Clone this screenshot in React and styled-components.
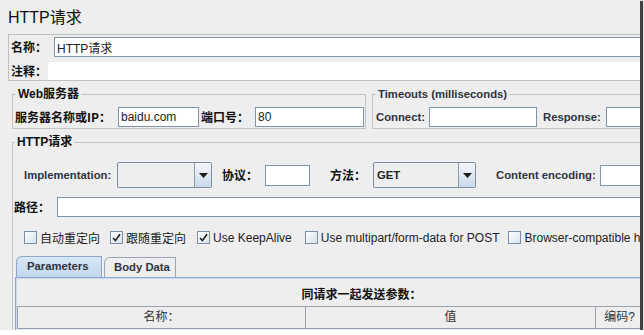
import React from 'react';
import styled, { createGlobalStyle } from 'styled-components';

const Global = createGlobalStyle`
  html, body { margin: 0; padding: 0; background: #ffffff; }
  body {
    font-family: "Liberation Sans", "Noto Sans CJK SC", sans-serif;
    font-size: 12px;
    color: #222;
  }
  * { box-sizing: border-box; }
`;

const Frame = styled.div`
  width: 640px;
  height: 330px;
  overflow: hidden;
  background: #eeeeee;
  box-shadow: 2px 2px 1px 1px rgba(45, 45, 45, 0.9);
`;

const Inner = styled.div`
  width: 722px;
`;

const Title = styled.div`
  margin: 8px 0 6px 8px;
  font-size: 16px;
  line-height: 20px;
  color: #111;
`;

const NamePanel = styled.div`
  margin-left: 8px;
  border: 1px solid #c0c0c0;
  border-right: none;
  padding-top: 2px;
  display: flex;
  flex-direction: column;
  gap: 5px;
`;

const NameRow = styled.div`
  display: flex;
  align-items: center;
  height: ${p => p.$h}px;
`;

const CjkLabel = styled.div`
  flex: none;
  width: ${p => p.$w}px;
  margin-left: ${p => p.$ml || 0}px;
  padding-left: ${p => p.$pl || 0}px;
  font-family: "Noto Sans CJK SC", sans-serif;
  font-weight: 700;
  font-size: 12px;
  color: #111;
  white-space: nowrap;
  line-height: 16px;
`;

const EnLabel = styled.div`
  flex: none;
  width: ${p => p.$w}px;
  margin-left: ${p => p.$ml || 0}px;
  font-family: "Liberation Sans", sans-serif;
  font-weight: 700;
  font-size: 11.3px;
  color: #2f3342;
  white-space: nowrap;
  line-height: 16px;
`;

const Field = styled.input`
  flex: ${p => (p.$w ? 'none' : '1')};
  width: ${p => (p.$w ? `${p.$w}px` : 'auto')};
  min-width: 0;
  height: ${p => p.$h || 20}px;
  border: 1px solid #8194aa;
  background: #ffffff;
  padding: 0 2px;
  margin: 0;
  font-family: "Liberation Sans", "Noto Sans CJK SC", sans-serif;
  font-size: 12px;
  color: #222;
  outline: none;
`;

const CommentArea = styled.div`
  flex: 1;
  height: 18px;
  background: #ffffff;
`;

const FieldsetRow = styled.div`
  display: flex;
  gap: 6px;
  margin: 7px 0 0 12px;
`;

const Group = styled.fieldset`
  margin: 0;
  min-width: 0;
  flex: ${p => (p.$w ? 'none' : '1')};
  width: ${p => (p.$w ? `${p.$w}px` : 'auto')};
  padding: 7px 0 1px ${p => p.$pl}px;
  border: 1px solid #c4c4c4;
  display: flex;
  align-items: center;
`;

const Legend = styled.legend`
  margin-left: ${p => p.$ml || 0}px;
  padding: 0 2px;
  font-weight: 700;
  font-size: ${p => (p.$cjk ? 12 : 11.3)}px;
  font-family: ${p => (p.$cjk ? '"Liberation Sans", "Noto Sans CJK SC", sans-serif' : '"Liberation Sans", sans-serif')};
  line-height: 12px;
  color: ${p => (p.$cjk ? '#111' : '#2f3342')};
`;

const HttpGroup = styled.fieldset`
  margin: 7px 12px 0 12px;
  min-width: 0;
  padding: 14px 2px 20px 1px;
  border: 1px solid #c4c4c4;
`;

const FormRow = styled.div`
  display: flex;
  align-items: center;
  height: ${p => p.$h}px;
  margin-top: ${p => p.$mt || 0}px;
`;

const Combo = styled.div`
  flex: none;
  width: ${p => p.$w}px;
  height: 26px;
  display: flex;
  border: 1px solid #7d8ea3;
  border-radius: 2px;
  background: #eeeeee;
  overflow: hidden;
`;

const ComboValue = styled.div`
  flex: 1;
  padding-left: 3px;
  line-height: 24px;
  font-weight: 700;
  font-size: 11.3px;
  color: #222;
`;

const ArrowButton = styled.div`
  flex: none;
  width: 17px;
  border-left: 1px solid #8a9bb0;
  background: linear-gradient(#f4f7fb, #c9d8ea);
  display: flex;
  align-items: center;
  justify-content: center;
`;

const CheckRow = styled.div`
  display: flex;
  align-items: center;
  height: 17px;
  margin-top: 12px;
  padding-left: 10px;
  white-space: nowrap;
`;

const CheckItem = styled.div`
  display: flex;
  align-items: center;
  gap: 3px;
  margin-right: ${p => p.$mr}px;
  flex: none;
`;

const Box = styled.div`
  width: 13px;
  height: 13px;
  border: 1px solid #7b8ea4;
  background: linear-gradient(135deg, #ffffff, #d6e1ee);
  display: flex;
  align-items: center;
  justify-content: center;
`;

const CheckText = styled.span`
  font-family: "Liberation Sans", "Noto Sans CJK SC", sans-serif;
  font-size: 12px;
  color: #222;
`;

const TabArea = styled.div`
  margin: 10px 0 0 1px;
`;

const TabStrip = styled.div`
  display: flex;
  align-items: flex-end;
  height: 21px;
  padding-left: 1px;
  gap: 2px;
`;

const Tab = styled.div`
  flex: none;
  width: ${p => p.$w}px;
  height: ${p => (p.$active ? 21 : 20)}px;
  padding-left: ${p => p.$pl}px;
  border: 1px solid ${p => (p.$active ? '#8ea8ca' : '#9aa6b4')};
  border-bottom: none;
  border-top-left-radius: 6px;
  background: ${p => (p.$active ? 'linear-gradient(#d8e6f5, #c2d7ee)' : '#eeeeee')};
  font-weight: 700;
  font-size: 11.3px;
  line-height: 19px;
  color: #2f3342;
`;

const TabPanel = styled.div`
  border-top: 1px solid #8ca8cd;
  border-left: 1px solid #8ca8cd;
  box-shadow: inset 1px 1px 0 #c8d8ee;
  height: 60px;
`;

const Caption = styled.div`
  padding-top: 8px;
  line-height: 16px;
  text-align: center;
  font-family: "Noto Sans CJK SC", sans-serif;
  font-weight: 700;
  font-size: 12px;
  color: #111;
`;

const HeaderRow = styled.div`
  display: flex;
  margin: 4px 0 0 1px;
  height: 23px;
  border-top: 1px solid #9ba4ae;
  border-left: 1px solid #9ba4ae;
  border-bottom: 1px solid #8e9cad;
`;

const HeaderCell = styled.div`
  flex: none;
  width: ${p => p.$w}px;
  border-right: 1px solid #9ba4ae;
  text-align: center;
  line-height: 21px;
  font-family: "Liberation Sans", "Noto Sans CJK SC", sans-serif;
  font-size: 12px;
  color: #333;
`;

const Check = () => (
  <svg width="9" height="9" viewBox="0 0 9 9">
    <path d="M1 5 L3.4 7.6 L8 1.2" fill="none" stroke="#1a1a1a" strokeWidth="1.6" />
  </svg>
);

const Arrow = () => (
  <svg width="9" height="5" viewBox="0 0 9 5">
    <polygon points="0,0 9,0 4.5,5" fill="#1a1a1a" />
  </svg>
);

const checks = [
  { label: '自动重定向', on: false, mr: 10 },
  { label: '跟随重定向', on: true, mr: 11 },
  { label: 'Use KeepAlive', on: true, mr: 13 },
  { label: 'Use multipart/form-data for POST', on: false, mr: 9 },
  { label: 'Browser-compatible headers', on: false, mr: 10 },
];

export default function App() {
  return (
    <>
      <Global />
      <Frame>
        <Inner>
          <Title>HTTP请求</Title>

          <NamePanel>
            <NameRow $h={20}>
              <CjkLabel $w={45} $pl={2}>名称：</CjkLabel>
              <Field readOnly defaultValue="HTTP请求" />
            </NameRow>
            <NameRow $h={18}>
              <CjkLabel $w={39} $pl={2}>注释：</CjkLabel>
              <CommentArea />
            </NameRow>
          </NamePanel>

          <FieldsetRow>
            <Group $w={354} $pl={1}>
              <Legend $cjk $ml={2}>Web服务器</Legend>
              <CjkLabel $w={103} $ml={1}>服务器名称或IP：</CjkLabel>
              <Field $w={81} readOnly defaultValue="baidu.com" />
              <CjkLabel $w={54} $ml={2}>端口号：</CjkLabel>
              <Field $w={109} readOnly defaultValue="80" />
            </Group>
            <Group $pl={3}>
              <Legend>Timeouts (milliseconds)</Legend>
              <EnLabel $w={53}>Connect:</EnLabel>
              <Field $w={108} readOnly defaultValue="" />
              <EnLabel $w={63} $ml={6}>Response:</EnLabel>
              <Field $w={100} readOnly defaultValue="" />
            </Group>
          </FieldsetRow>

          <HttpGroup>
            <Legend $cjk $ml={1}>HTTP请求</Legend>
            <FormRow $h={26}>
              <EnLabel $w={93} $ml={10}>Implementation:</EnLabel>
              <Combo $w={95}>
                <ComboValue />
                <ArrowButton><Arrow /></ArrowButton>
              </Combo>
              <CjkLabel $w={43} $ml={10}>协议：</CjkLabel>
              <Field $w={45} $h={21} readOnly defaultValue="" />
              <CjkLabel $w={43} $ml={20}>方法：</CjkLabel>
              <Combo $w={103}>
                <ComboValue>GET</ComboValue>
                <ArrowButton><Arrow /></ArrowButton>
              </Combo>
              <EnLabel $w={104} $ml={20}>Content encoding:</EnLabel>
              <Field $w={110} $h={21} readOnly defaultValue="" />
            </FormRow>

            <FormRow $h={20} $mt={9}>
              <CjkLabel $w={43}>路径：</CjkLabel>
              <Field readOnly defaultValue="" />
            </FormRow>

            <CheckRow>
              {checks.map(c => (
                <CheckItem key={c.label} $mr={c.mr}>
                  <Box>{c.on && <Check />}</Box>
                  <CheckText>{c.label}</CheckText>
                </CheckItem>
              ))}
            </CheckRow>

            <TabArea>
              <TabStrip>
                <Tab $active $w={86} $pl={10}>Parameters</Tab>
                <Tab $w={72} $pl={9}>Body Data</Tab>
              </TabStrip>
              <TabPanel>
                <Caption>同请求一起发送参数：</Caption>
                <HeaderRow>
                  <HeaderCell $w={288}>名称：</HeaderCell>
                  <HeaderCell $w={290}>值</HeaderCell>
                  <HeaderCell $w={48}>编码?</HeaderCell>
                </HeaderRow>
              </TabPanel>
            </TabArea>
          </HttpGroup>
        </Inner>
      </Frame>
    </>
  );
}
